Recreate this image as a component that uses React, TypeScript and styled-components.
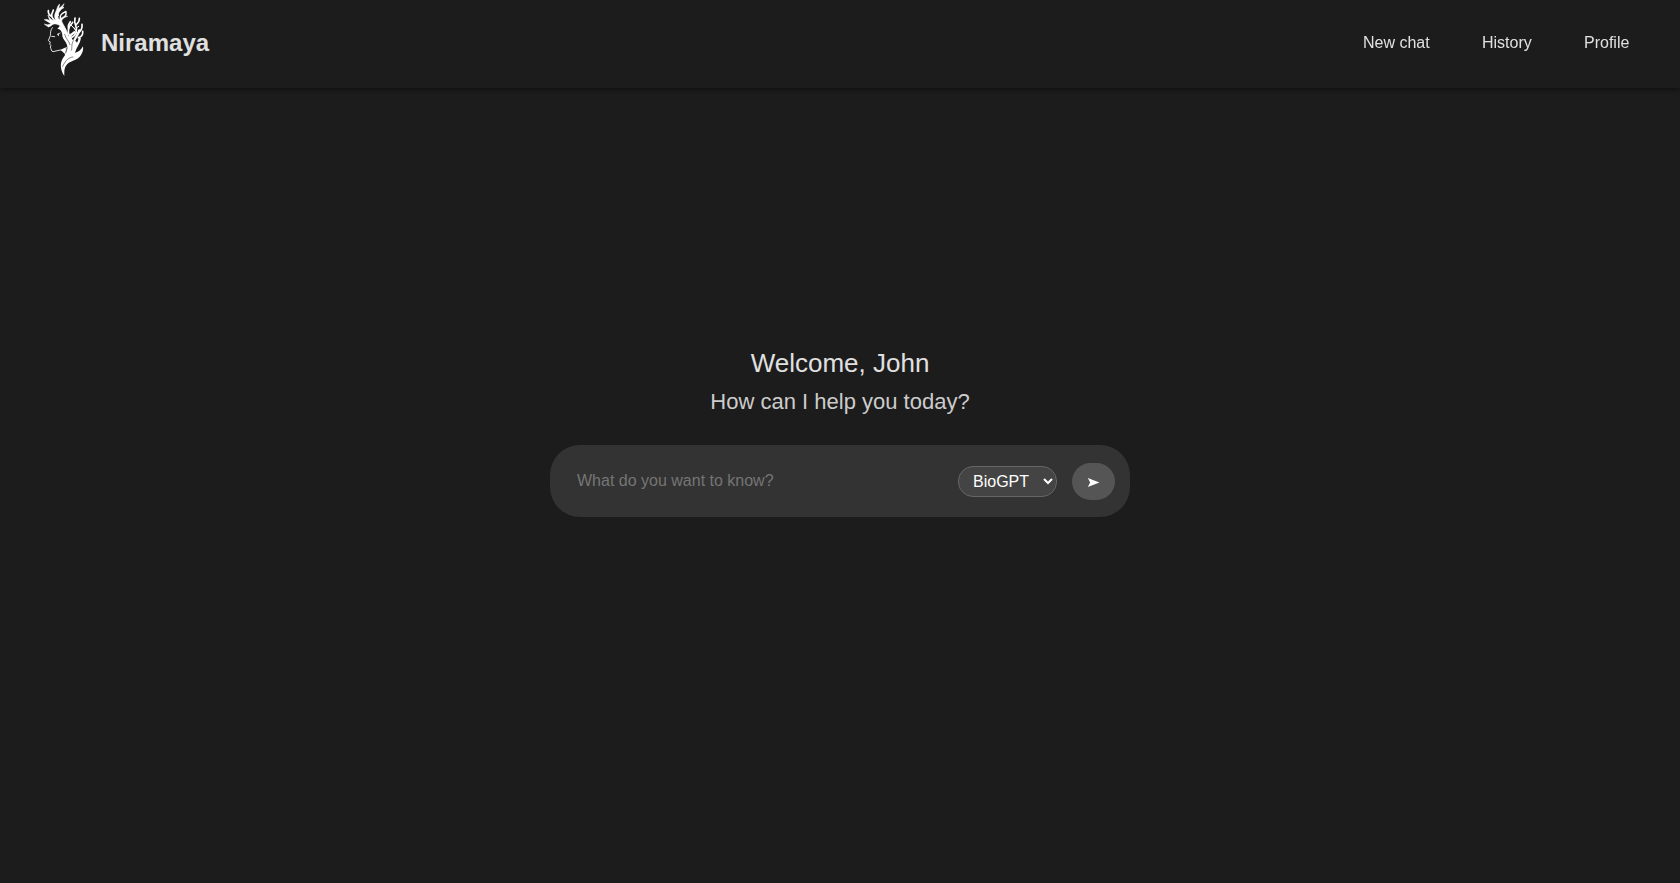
import React from 'react';
import styled, { createGlobalStyle } from 'styled-components';

const GlobalStyle = createGlobalStyle`
  * { box-sizing: border-box; }
  body {
    margin: 0;
    background: #1c1c1c;
    color: #e0e0e0;
    font-family: Arial, "Liberation Sans", sans-serif;
  }
`;

const Page = styled.div`
  display: flex;
  flex-direction: column;
  height: 883px;
  overflow: hidden;
`;

const Header = styled.header`
  display: flex;
  align-items: center;
  justify-content: space-between;
  height: 88px;
  flex: none;
  padding: 0 51px 0 30px;
  background: #1c1c1c;
  box-shadow: 0 2px 4px rgba(0, 0, 0, 0.4);
`;

const Brand = styled.div`
  display: flex;
  align-items: center;
  gap: 1px;
`;

const LogoMark = styled.svg`
  display: block;
  width: 70px;
  height: 88px;
`;

const BrandName = styled.h1`
  margin: 0;
  padding-bottom: 2px;
  font-size: 24px;
  line-height: 28px;
  font-weight: bold;
`;

const Nav = styled.nav`
  display: flex;
  gap: 52px;
  padding-bottom: 3px;
`;

const NavLink = styled.a`
  color: #e0e0e0;
  font-size: 16px;
  line-height: 18px;
  text-decoration: none;
  will-change: transform;
`;

const Main = styled.main`
  display: flex;
  flex-direction: column;
  align-items: center;
  padding-top: 260px;
`;

const Welcome = styled.h2`
  margin: 0;
  font-size: 26px;
  line-height: 30px;
  font-weight: normal;
`;

const Question = styled.p`
  margin: 11px 0 30px;
  color: #ccc;
  font-size: 22px;
  line-height: 26px;
`;

const Composer = styled.form`
  display: flex;
  align-items: center;
  width: 580px;
  height: 72px;
  padding: 0 15px 0 17px;
  border-radius: 30px;
  background: #333;
`;

const PromptInput = styled.input`
  flex: 1;
  min-width: 0;
  margin-right: 15px;
  padding: 10px;
  border: 0;
  outline: 0;
  background: transparent;
  color: #fff;
  font: 16px Arial, "Liberation Sans", sans-serif;

  &::placeholder { color: #757575; }
`;

const ModelSelect = styled.select`
  width: 99px;
  height: 31px;
  margin-right: 15px;
  padding: 5px 10px;
  border: 1px solid #666;
  border-radius: 15px;
  background: #444;
  color: #fff;
  font: 16px Arial, "Liberation Sans", sans-serif;
`;

const SendButton = styled.button`
  width: 43px;
  height: 37px;
  padding: 2px 0 0;
  border: 0;
  border-radius: 20px;
  background: #555;
  color: #fff;
  display: flex;
  align-items: center;
  justify-content: center;
`;

const Logo = () => (
  <LogoMark viewBox="0 0 210 264" aria-label="Niramaya" fill="#fff">
    {/* crown of branches */}
    <path stroke="#fff" strokeWidth="1.6" strokeLinejoin="round" d="M43 72 C50 80 59 82 65 76 C71 70 83 70 91 79 C99 86 104 97 108 108 L115 104 C109 88 101 76 96 66 C93 60 101 52 113 49 C105 47 97 50 92 56 C87 61 83 53 84 44 C86 35 97 28 102 11 C94 21 89 23 86 25 L89 12 C82 17 81 28 78 34 C74 42 72 49 77 62 C69 64 60 57 54 45 C55 51 57 56 60 62 C54 59 49 57 43 59 C51 63 56 67 63 71 C57 75 49 75 43 72 Z" />
    <g fill="none" stroke="#fff" strokeLinecap="round" strokeLinejoin="round">
      <path strokeWidth="5" d="M78 65 C64 54 61 46 68 36 L70 30 M65 50 C57 45 54 39 55 32" />
      <path strokeWidth="4" d="M85 46 C79 36 86 28 100 23 M92 57 C88 46 94 41 108 34 M104 50 C108 46 110 41 107 35 M60 76 L55 80" />
      {/* flowing hair */}
      <path strokeWidth="5" d="M112 110 C118 99 116 91 115 79 C115 73 119 70 121 65" />
      <path strokeWidth="5" d="M116 86 C118 74 126 73 128 67 M126 112 C140 104 142 91 137 76 C134 68 133 62 135 54 M137 75 C144 69 149 64 148 55 M143 100 C153 93 158 86 156 73 M145 113 C155 110 159 103 158 94" />
      <path strokeWidth="7" d="M120 135 C113 121 119 106 133 97 M126 136 C132 117 143 108 148 91 M133 154 C137 137 147 132 149 116" />
      <path strokeWidth="3" d="M139 92 L124 76 M143 101 L132 83 M139 84 L146 79" />
    </g>
    <path d="M82 87 C92 85 98 98 97 109 C99 119 108 125 111 135 C115 149 108 162 99 174 C89 190 91 209 103 228 C103 215 102 206 109 196 C118 182 139 183 151 168 C157 160 161 150 159 139 C153 151 144 156 135 158 C132 148 145 138 141 128 C137 119 127 126 125 112 L120 98 L113 112 L103 89 L90 77 Z" />
    <path d="M90 150 L111 140 L108 167 C103 163 102 155 90 150 Z" />
    {/* facial profile */}
    <g fill="none" stroke="#ddd" strokeWidth="3" strokeLinejoin="round" strokeLinecap="round">
      <path d="M67 83 C60 92 62 100 61 107 L55 122 L61 126 L59 132 L63 137 L61 141 C64 147 63 154 69 155 L91 150" />
      <path d="M65 109 L74 110 M82 103 L91 99 M86 102 L85 107" />
    </g>
    <g fill="none" stroke="#1c1c1c" strokeWidth="1.6" strokeLinecap="round">
      <path d="M89 91 C93 108 87 120 105 136 C113 148 108 160 100 165 M104 103 C107 117 116 120 120 134 M130 122 C122 137 128 143 124 151 M98 199 C106 181 118 171 129 171" />
    </g>
  </LogoMark>
);

const SendIcon = () => (
  <svg width="13" height="9" viewBox="0 0 13 9" aria-hidden="true">
    <path d="M.8 0 12.4 4.5 .8 9 3.2 4.5Z" fill="#fff" />
  </svg>
);

export default function App() {
  return (
    <>
      <GlobalStyle />
      <Page>
        <Header>
          <Brand>
            <Logo />
            <BrandName>Niramaya</BrandName>
          </Brand>
          <Nav>
            <NavLink>New chat</NavLink>
            <NavLink>History</NavLink>
            <NavLink>Profile</NavLink>
          </Nav>
        </Header>
        <Main>
          <Welcome>Welcome, John</Welcome>
          <Question>How can I help you today?</Question>
          <Composer onSubmit={(event: React.FormEvent) => event.preventDefault()}>
            <PromptInput placeholder="What do you want to know?" />
            <ModelSelect defaultValue="BioGPT">
              <option>BioGPT</option>
            </ModelSelect>
            <SendButton type="submit" aria-label="Send">
              <SendIcon />
            </SendButton>
          </Composer>
        </Main>
      </Page>
    </>
  );
}
